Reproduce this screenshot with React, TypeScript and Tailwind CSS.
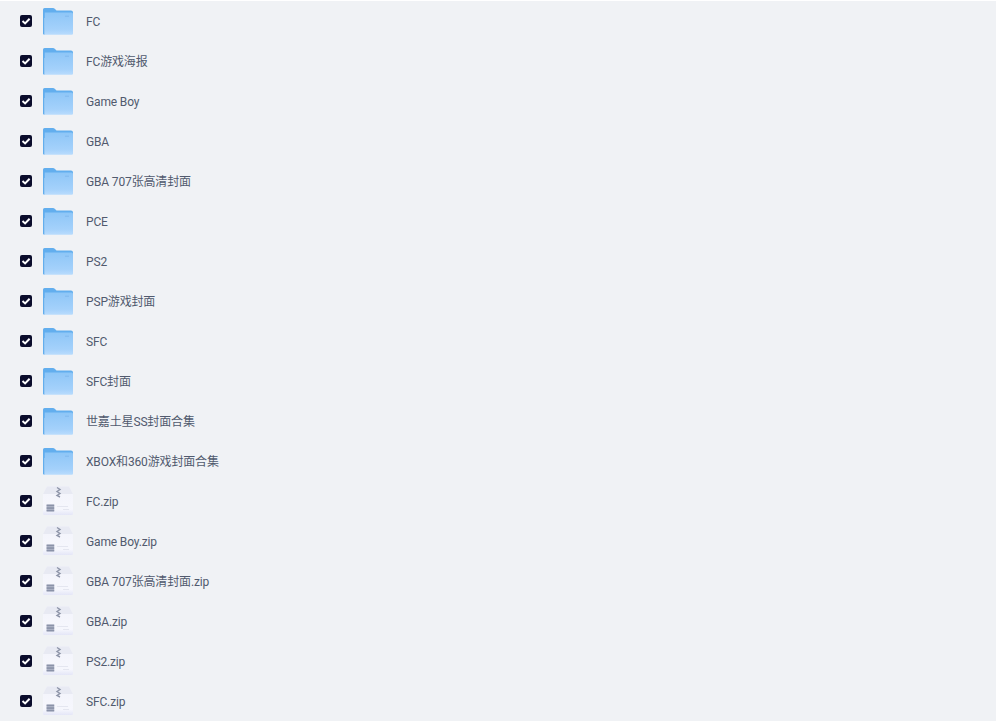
const rows: [string, boolean][] = [
  ["FC", true],
  ["FC游戏海报", true],
  ["Game Boy", true],
  ["GBA", true],
  ["GBA 707张高清封面", true],
  ["PCE", true],
  ["PS2", true],
  ["PSP游戏封面", true],
  ["SFC", true],
  ["SFC封面", true],
  ["世嘉土星SS封面合集", true],
  ["XBOX和360游戏封面合集", true],
  ["FC.zip", false],
  ["Game Boy.zip", false],
  ["GBA 707张高清封面.zip", false],
  ["GBA.zip", false],
  ["PS2.zip", false],
  ["SFC.zip", false],
];

function FolderIcon() {
  return (
    <svg width="30" height="30" viewBox="0 0 30 30" className="block">
      <defs>
        <linearGradient id="fb" x1="0" y1="0" x2="0" y2="1">
          <stop offset="0" stopColor="#8ec6f7" />
          <stop offset="0.75" stopColor="#a4d1fb" />
          <stop offset="1" stopColor="#b9dcfd" />
        </linearGradient>
      </defs>
      <path d="M0 3.5 Q0 2 1.5 2 H10 Q11 2 12 3 L13.5 4.5 H28 Q30 4.5 30 6.5 V12 H0 Z" fill="#62aeee" />
      <path d="M1.5 6.5 H28.5 Q30 6.5 30 8 V27.5 Q30 28.8 28.8 28.8 H1.5 Z" fill="url(#fb)" />
      <path d="M0 5 H1.5 V28.8 Q0 28.8 0 27.3 Z" fill="#62aeee" />
      <rect x="22" y="9.5" width="4" height="1.6" rx="0.5" fill="#86bdf0" />
    </svg>
  );
}

function ZipIcon() {
  return (
    <svg width="30" height="30" viewBox="0 0 30 30" className="block">
      <defs>
        <linearGradient id="zb" x1="0" y1="0" x2="0" y2="1">
          <stop offset="0" stopColor="#f3f4fb" />
          <stop offset="0.8" stopColor="#f6f7fd" />
          <stop offset="1" stopColor="#e4e6f7" />
        </linearGradient>
      </defs>
      <path d="M4 0.5 H26 L30 8 V27.5 Q30 29 28.5 29 H1.5 Q0 29 0 27.5 V8 Z" fill="url(#zb)" />
      <path d="M4 0.5 H26 L30 8 H0 Z" fill="#e8eaf3" />
      <path d="M14 1.5 L17 3.5 L14 5.5 L17 7.5 L14 9.5 L17 11" fill="none" stroke="#8d94a8" strokeWidth="1.4" />
      <rect x="3.6" y="18.6" width="7.6" height="6.8" fill="#b9bfd0" />
      <rect x="3.6" y="18.6" width="7.6" height="1.7" fill="#8a92a8" />
      <rect x="3.6" y="21.2" width="7.6" height="1.7" fill="#8a92a8" />
      <rect x="3.6" y="23.7" width="7.6" height="1.7" fill="#8a92a8" />
      <rect x="14" y="20" width="11" height="1" fill="#e4e6f0" />
      <rect x="20" y="23" width="6" height="1" fill="#e4e6f0" />
    </svg>
  );
}

function Check() {
  return (
    <span className="flex h-3 w-3 items-center justify-center rounded-[2px] bg-[#0b0d2c]">
      <svg width="10" height="10" viewBox="0 0 10 10">
        <path d="M1.5 5 L4.1 7.4 L8.6 2.7" fill="none" stroke="#ffffff" strokeWidth="2" />
      </svg>
    </span>
  );
}

export default function App() {
  return (
    <div className="h-[727px] w-[996px] overflow-hidden bg-white pt-px font-['Roboto','Noto_Sans_CJK_SC',sans-serif]">
      <div className="bg-[#f0f2f5]">
        {rows.map(([name, isFolder]) => (
          <div key={name} className="flex h-10 items-center pl-5">
            <Check />
            <span className="ml-[11px] block">{isFolder ? <FolderIcon /> : <ZipIcon />}</span>
            <span className="ml-[13px] pt-0.5 text-xs leading-none tracking-[-0.15px] text-[#515a6e]">{name}</span>
          </div>
        ))}
      </div>
    </div>
  );
}
